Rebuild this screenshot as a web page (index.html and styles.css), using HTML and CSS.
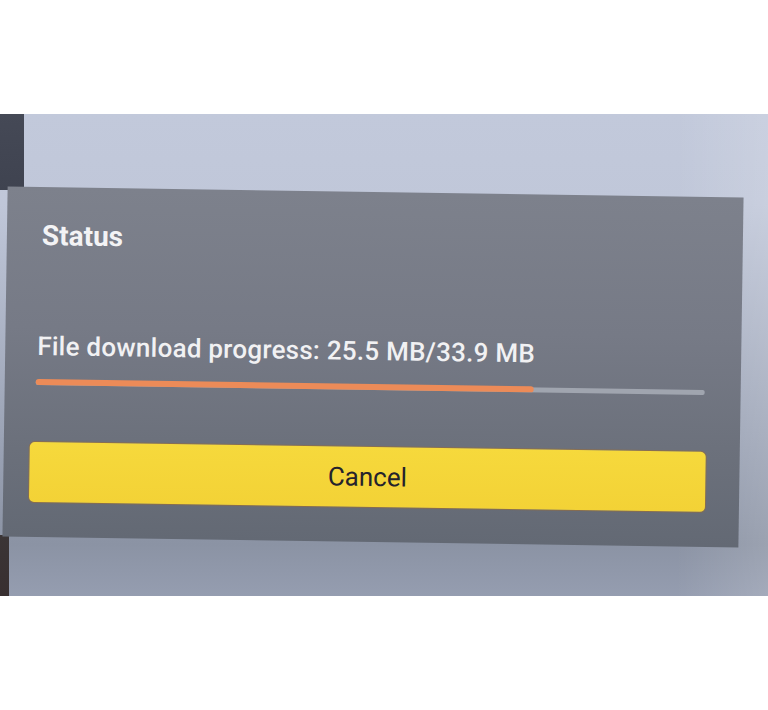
FILE: index.html
```html
<!DOCTYPE html>
<html lang="en">
<head>
<meta charset="utf-8">
<title>Status</title>
<link rel="stylesheet" href="styles.css">
</head>
<body>
<div class="page">
  <div class="top-gap"></div>
  <div class="photo">
    <section class="dialog">
      <h1 class="title">Status</h1>
      <p class="label">File download progress: 25.5 MB/33.9 MB</p>
      <div class="bar"><div class="fill" style="width:74.5%"></div></div>
      <button class="cancel">Cancel</button>
    </section>
  </div>
</div>
</body>
</html>
```

FILE: styles.css
```css
html, body {
  margin: 0;
  padding: 0;
  background: #ffffff;
}

body {
  font-family: Roboto, "Liberation Sans", sans-serif;
  width: 768px;
  height: 710px;
  overflow: hidden;
}

.page {
  display: flex;
  flex-direction: column;
}

.top-gap {
  height: 114px;
}

.photo {
  height: 482px;
  box-sizing: border-box;
  padding: 78px 0 0 5px;
  overflow: hidden;
  background:
    linear-gradient(#454956, #3f4350) 0 0 / 24px 76px no-repeat,
    linear-gradient(#3b3536, #382f30) 0 421px / 9px 61px no-repeat,
    linear-gradient(to right, rgba(255,255,255,0) 0, rgba(255,255,255,0) 88%, rgba(255,255,255,0.14) 100%),
    linear-gradient(to bottom, #c2c9db 0, #c0c7d9 90px, #9aa2b4 330px, #8b93a4 430px, #959db0 482px);
}

.dialog {
  width: 736px;
  height: 350px;
  box-sizing: border-box;
  padding-top: 33px;
  transform: rotate(0.85deg);
  background: linear-gradient(to bottom, #7d818c 0, #767a86 40%, #6b707b 75%, #636974 100%);
  display: flex;
  flex-direction: column;
  align-items: flex-start;
}

.title {
  margin: 0 0 0 35px;
  font-size: 28px;
  line-height: 32px;
  font-weight: 700;
  color: #f3f3f5;
}

.label {
  margin: 78px 0 0 32px;
  font-size: 26px;
  line-height: 32px;
  font-weight: 500;
  letter-spacing: 0.25px;
  color: #f1f1f3;
  white-space: nowrap;
}

.bar {
  margin: 18px 0 0 31px;
  width: 669px;
  height: 5px;
  background: #a0a5af;
  border-radius: 2px;
}

.fill {
  height: 6px;
  margin-top: -1px;
  background: #ec8b58;
  border-radius: 3px;
}

.cancel {
  margin: 57px 0 0 26px;
  width: 676px;
  height: 60px;
  border: none;
  border-radius: 5px;
  background: linear-gradient(to bottom, #f6d93c, #f3d236);
  box-shadow: 0 0 0 1px rgba(160, 110, 50, 0.55);
  font-family: Roboto, "Liberation Sans", sans-serif;
  font-size: 26px;
  font-weight: 400;
  color: #24232c;
  padding: 0;
}
```
